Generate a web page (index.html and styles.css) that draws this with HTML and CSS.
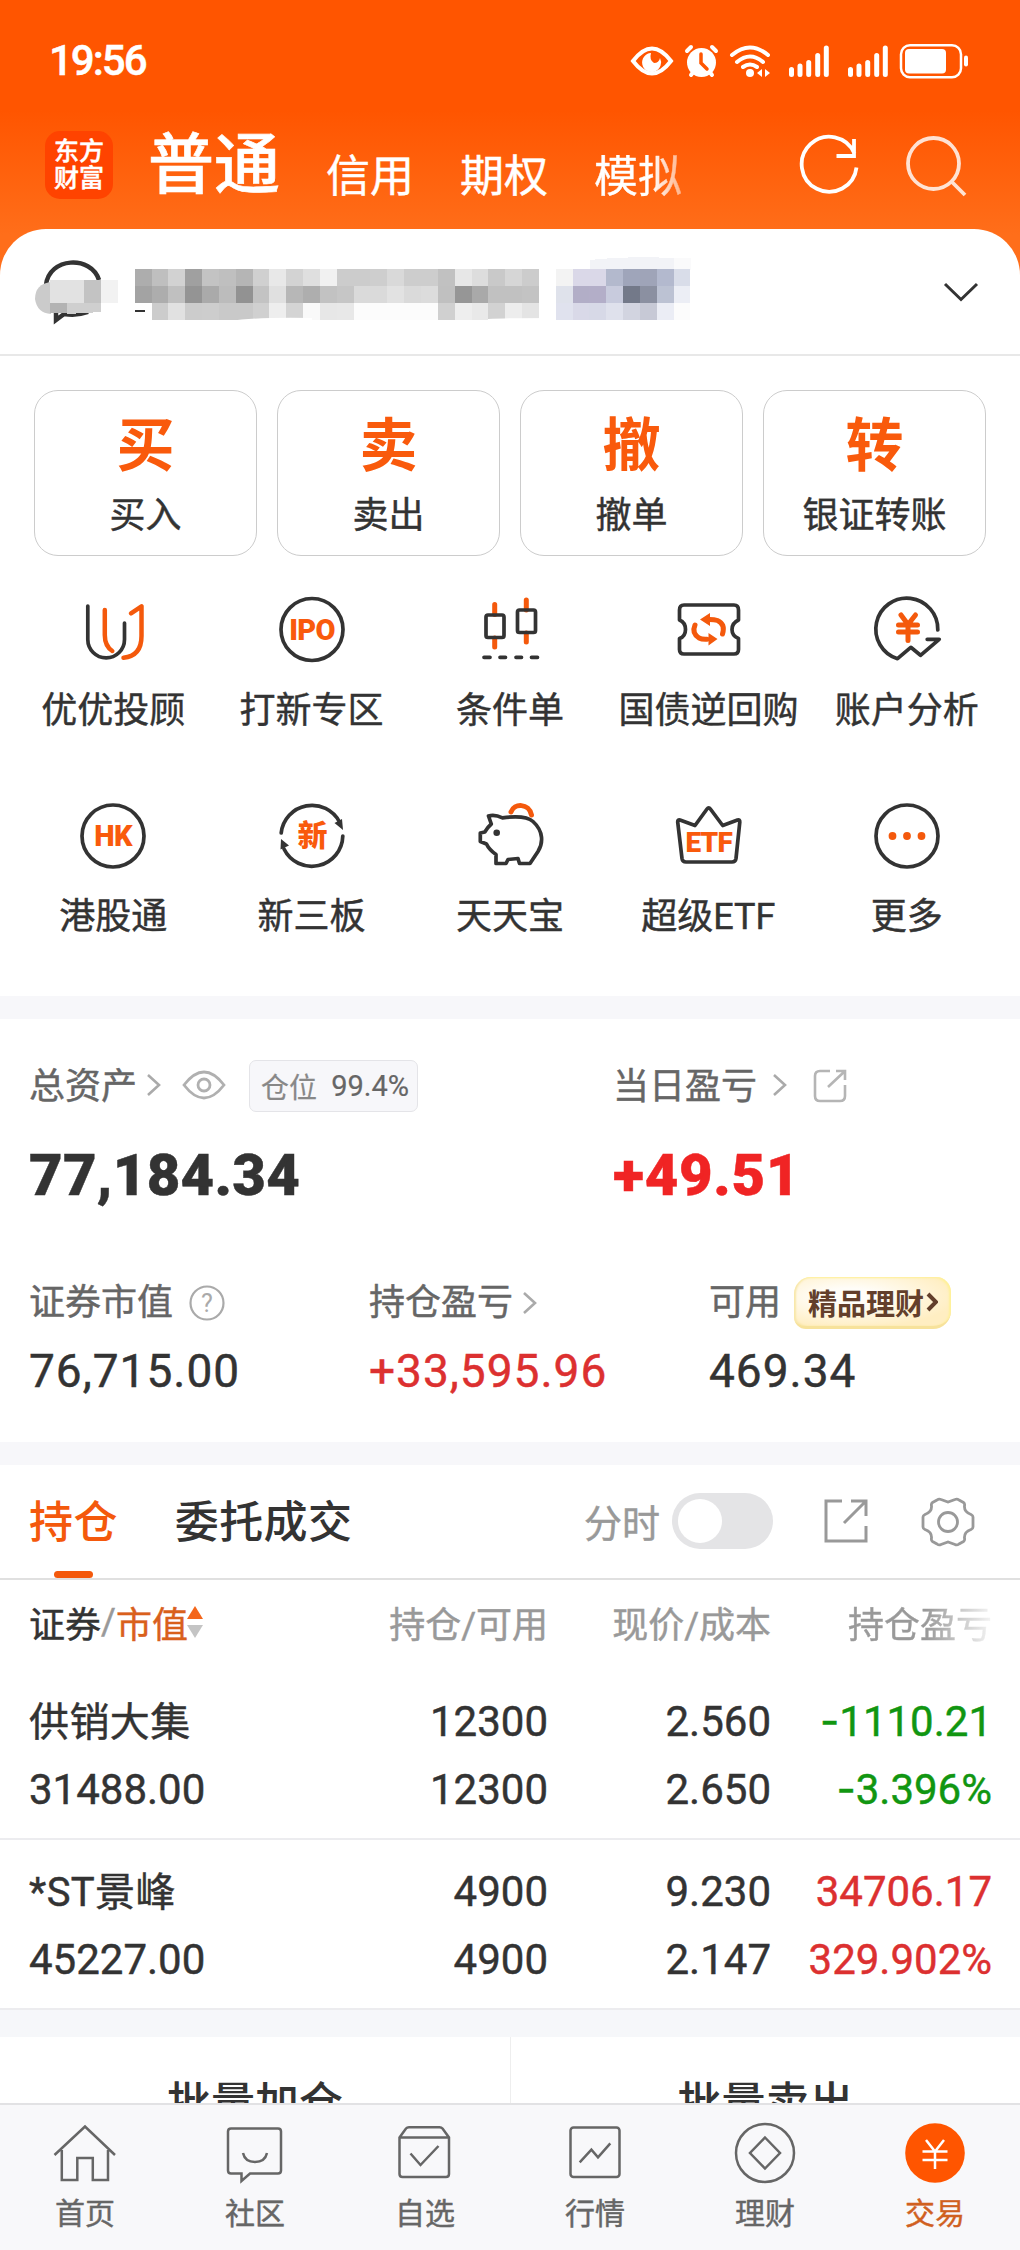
FILE: index.html
```html
<!DOCTYPE html>
<html lang="zh-CN">
<head>
<meta charset="utf-8">
<title>东方财富 - 交易</title>
<link rel="stylesheet" href="styles.css">
</head>
<body>
<div class="app">
  <header class="top">
    <div class="status">
      <span class="clock">19:56</span>
      <svg class="status-icons" viewBox="625 36 350 44" fill="none" stroke="#fff" stroke-width="4" stroke-linecap="round">
        <path d="M632 59q19-25 38 0q-19 25-38 0z"/>
        <path d="M650 51a9.5 9.5 0 1 0 9 5q-1 5-6 5q-5-3-3-10z" fill="#fff" stroke="none"/>
        <circle cx="700.5" cy="60.500" r="14.500" fill="#fff" stroke="none"/>
        <path d="M686 49l4-4M715 49l-4-4M690 73l3-4M711 73l-3-4"/>
        <path d="M700 52v9l6 6" stroke="#ff5500" stroke-width="3.500"/>
        <path d="M731 53q18-15 36 0M736 60q13-11 26 0M742 65q7-5 14 0"/>
        <circle cx="749" cy="71" r="4" fill="#fff" stroke="none"/>
        <path d="M756 71l5-4v8zM769 71l-5-4v8z" fill="#fff" stroke="none"/>
        <path stroke-width="5" d="M790.500 67.500v5M799 64v8.500M807.700 60.500v12M816.700 53.500v19M825.300 46v26.500M849.500 67.500v5M858 64v8.500M866.700 60.500v12M875.700 53.500v19M884.300 46v26.500"/>
        <rect x="900" y="43.200" width="60" height="32" rx="9" stroke-width="2.500"/>
        <rect x="904" y="47" width="41" height="24.500" rx="4" fill="#fff" stroke="none"/>
        <path d="M965 55.500v7"/>
      </svg>
    </div>
    <nav class="modes">
      <div class="logo"><span>东方</span><span>财富</span></div>
      <span class="mode mode-on">普通</span>
      <span class="mode">信用</span>
      <span class="mode">期权</span>
      <span class="mode mode-fade">模拟</span>
      <svg class="head-icon refresh" viewBox="0 0 64 64"><path d="M57.500 18.500A27.500 27.500 0 1 0 59.500 32.500M57 4v17H39.500" transform="translate(0 1)"/></svg>
      <svg class="head-icon search" viewBox="0 0 64 64"><circle cx="29.500" cy="29.500" r="25.500"/><path d="M47 47l14 14"/></svg>
    </nav>
  </header>

  <main class="sheet">
    <section class="account">
      <svg class="mosaic" viewBox="0 229 720 126" shape-rendering="crispEdges">
        <g shape-rendering="auto" fill="none" stroke="#333" stroke-width="4.500"><path d="M46 285C49 257 91 255 99 280M56 311v9l8-6q13 2 24-2"/></g>
        <path d="M135 310.500h10" stroke="#333" stroke-width="2"/>
        <path d="M51 282q-16 2-16 17q2 14 16 15z" fill="#cbcbcb" shape-rendering="auto"/>
        <path fill="#e2e2e2" d="M50 280h34v23H50z"/><path fill="#c3c3c3" d="M84 280h17v23H84z"/><path fill="#f2f2f2" d="M101 280h17v23h-17z"/>
        <path fill="#b3b3b3" d="M50 303h18v10H50z"/><path fill="#cfcfcf" d="M67 303h34v9l-34 2z"/>
        <path fill="#f2f3f7" d="M590 260q35-4 84-2v12h-84z"/><path fill="#fafafb" d="M674 258h17v12h-17z"/>
        <g id="cells"></g>
        <path fill="#fff" shape-rendering="auto" d="M143 312q3 8 12 9h-12zM230 321q25-4 82-3v3zM488 321v-2q20-1 66-1v3z"/>
      </svg>
      <svg class="down" viewBox="0 0 36 22"><path d="M2 3l16 15.500L34 3"/></svg>
    </section>

    <section class="actions">
      <div class="card"><b>买</b><span>买入</span></div>
      <div class="card"><b>卖</b><span>卖出</span></div>
      <div class="card"><b>撤</b><span>撤单</span></div>
      <div class="card"><b>转</b><span>银证转账</span></div>
    </section>

    <section class="tools">
      <div class="tool"><svg viewBox="0 0 80 80"><path d="M14.800 16v33.500a18.300 18.300 0 0 0 36.700 0V33"/><path class="o u" d="M31.800 20v25q0 11 7.500 16M58 23.300l10.500-7V46q0 20-18 21.700"/></svg><span>优优投顾</span></div>
      <div class="tool"><svg viewBox="0 0 80 80"><circle cx="40" cy="39.500" r="31"/><text x="40" y="50">IPO</text></svg><span>打新专区</span></div>
      <div class="tool"><svg viewBox="0 0 80 80"><path class="o w" d="M24.700 14.500v10M24.700 48v9M56.300 10v10M56.300 43v9"/><rect x="16" y="25" width="18" height="22.500" rx="2"/><rect x="47.500" y="20" width="18" height="22.500" rx="2"/><path d="M14 67.300h6M30 67.300h5.500M46 67.300h5.500M61.500 67.300h6"/></svg><span>条件单</span></div>
      <div class="tool"><svg viewBox="0 0 80 80"><path d="M16 15h50q4.500 0 4.500 5v10q-6.500 3-6.500 9.500t6.500 9v11q0 4.500-4.500 4.500H16q-4.500 0-4.500-4.500v-11q6-2 6-9t-6-9.500V20q0-5 4.500-5z"/><path class="o w" d="M54.500 44q3-10-5-13.500-3-1-8-1M27 35q-3.500 8 4 13 3 1.500 8 1.200"/><path class="f" d="M32 29.500l10-6.500v13zM49.500 49l-9-6v12.500z"/></svg><span>国债逆回购</span></div>
      <div class="tool"><svg viewBox="0 0 80 80"><path d="M70.800 40A31 31 0 1 0 30.500 68.700L43.800 57.300 53.500 65.300 72.200 49.300H60.200"/><path class="o w" d="M34 25l7 9.500L48.500 25M31.500 35h19M31.500 42h19M41 35v15.500"/></svg><span>账户分析</span></div>
      <div class="tool"><svg viewBox="0 0 80 80"><circle cx="40" cy="40" r="31"/><text x="40" y="50">HK</text></svg><span>港股通</span></div>
      <div class="tool"><svg viewBox="0 0 80 80"><path d="M9.200 37A31 31 0 0 1 67.500 26M70.800 40A31 31 0 0 1 12 53"/><path class="d" d="M62.500 27l7.500-4 1 11zM9 43l8 6.500-8.500 4z"/><text class="cn" x="40" y="50">新</text></svg><span>新三板</span></div>
      <div class="tool"><svg viewBox="0 0 80 80"><path class="o w" d="M41 16C44 7 59 7 61.500 19"/><path d="M18.500 20q6-2 14 1.800C46 20 57 20 63 25.500c11 10 10 22 5 30L60 67.500H49.500L48 62.500l-10 1-2 4H26v-9q-7-5-9.500-10.500L10.300 45.500v-8.500l4.500-1q3-5 6.500-8z"/><circle class="d" cx="26.700" cy="36.800" r="3.300"/></svg><span>天天宝</span></div>
      <div class="tool"><svg viewBox="0 0 80 80"><path d="M12 24l15 5.500L39 13q1.700-2.300 3.400 0L54.700 29.500 69.500 24q2.500-.5 2.300 2L68 62.500q-.5 3.500-4 3.500H18q-3.500 0-4-3.500L9.700 26q0-2.500 2.300-2z"/><text class="etf" x="40.700" y="56">ETF</text></svg><span>超级ETF</span></div>
      <div class="tool"><svg viewBox="0 0 80 80"><circle cx="40" cy="40" r="31"/><g class="f"><circle cx="25.500" cy="40" r="3.900"/><circle cx="40" cy="40" r="3.900"/><circle cx="54.500" cy="40" r="3.900"/></g></svg><span>更多</span></div>
    </section>

    <section class="assets">
      <div class="row heads">
        <div class="cell total"><span>总资产</span><svg class="chev" viewBox="0 0 16 24"><path d="M2 2l11 10L2 22"/></svg>
          <svg class="eye" viewBox="0 0 44 30"><path d="M2 15Q22-11 42 15 22 41 2 15z"/><circle cx="22" cy="15" r="6"/></svg>
          <span class="tag"><i>仓位</i><em>99.4%</em></span></div>
        <div class="cell"><span>当日盈亏</span><svg class="chev day" viewBox="0 0 16 24"><path d="M2 2l11 10L2 22"/></svg>
          <svg class="ext" viewBox="0 0 34 34"><path d="M17 2H7Q2 2 2 7v20q0 5 5 5h20q5 0 5-5V16M15 18L32 2M23 2h9v9"/></svg></div>
      </div>
      <div class="row big"><div class="cell total">77,184.34</div><div class="cell red">+49.51</div></div>
      <div class="trio labels">
        <div><span>证券市值</span><svg class="help" viewBox="0 0 36 36"><circle cx="18" cy="18" r="16.500"/><text x="18" y="27">?</text></svg></div>
        <div><span>持仓盈亏</span><svg class="chev" viewBox="0 0 16 24"><path d="M2 2l11 10L2 22"/></svg></div>
        <div><span>可用</span><div class="badge">精品理财<svg viewBox="0 0 12 20"><path d="M2 2l8 8-8 8"/></svg></div></div>
      </div>
      <div class="trio values"><div>76,715.00</div><div class="red2">+33,595.96</div><div>469.34</div></div>
    </section>

    <section class="holdings">
      <div class="tabs">
        <span class="tab tab-on">持仓</span><span class="tab">委托成交</span>
        <span class="minute">分时</span><span class="switch"></span>
        <svg class="open" viewBox="0 0 44 44"><path d="M18 2H2v40h40V27M20 24L41 3M27 2h15v15"/></svg>
        <svg class="gear" viewBox="-27 -27 54 54"><path d="M-7-22.500L0-20 7-22.500Q9-23.500 11-22L15.500-19.500Q17-18.500 16.500-16 16-10 23-7.500 25-6.500 25-5V5Q25 6.500 23 7.500 16 10 16.500 16 17 18.500 15.500 19.500L11 22Q9 23.500 7 22.500L0 20-7 22.500Q-9 23.500-11 22L-15.500 19.500Q-17 18.500-16.500 16-16 10-23 7.500-25 6.500-25 5V-5Q-25-6.500-23-7.500-16-10-16.500-16-17-18.500-15.500-19.500L-11-22Q-9-23.500-7-22.500z"/><circle r="9.500"/></svg>
      </div>
      <div class="grid thead"><div><span class="ink">证券</span>/<span class="hot">市值</span><svg class="sort" viewBox="0 0 16 32"><path fill="#f4661b" d="M8 0l8 13H0z"/><path fill="#c4c4c4" d="M8 32l8-13H0z"/></svg></div><div>持仓/可用</div><div>现价/成本</div><div class="fade">持仓盈亏</div></div>
      <div class="stock">
        <div class="grid"><div class="name">供销大集</div><div>12300</div><div>2.560</div><div class="green"><span class="neg">-</span>1110.21</div></div>
        <div class="grid"><div>31488.00</div><div>12300</div><div>2.650</div><div class="green"><span class="neg">-</span>3.396%</div></div>
      </div>
      <div class="stock">
        <div class="grid"><div class="name">*ST景峰</div><div>4900</div><div>9.230</div><div class="red2">34706.17</div></div>
        <div class="grid"><div>45227.00</div><div>4900</div><div>2.147</div><div class="red2">329.902%</div></div>
      </div>
    </section>
    <section class="bulk"><div>批量加仓</div><div>批量卖出</div></section>
  </main>

  <footer class="nav">
    <div><svg viewBox="0 0 70 70"><path d="M4.500 37L35 8.500 65 37M11.800 32v30h15.500V40h15.500v22H58V32"/></svg><span>首页</span></div>
    <div><svg viewBox="0 0 70 70"><path d="M11 10.500h47q3 0 3 3v39q0 3-3 3H30l-8.500 7.500v-7.500H11q-3 0-3-3v-39q0-3 3-3zM23 35q2 9 12 9t12-9"/></svg><span>社区</span></div>
    <div><svg viewBox="0 0 70 70"><path d="M9.500 19.500L16 10.500Q17 9.300 19 9.300H49.500Q51.500 9.300 52.500 10.500L59 19.500V56q0 3-3 3H12.500q-3 0-3-3zH59M20.500 35.500L30.500 47 48.500 28"/></svg><span>自选</span></div>
    <div><svg viewBox="0 0 70 70"><rect x="10.500" y="9.500" width="49" height="49.500" rx="3"/><path d="M19.700 44.300L31.400 31.700 38 39.300 50.300 25.300"/></svg><span>行情</span></div>
    <div><svg viewBox="0 0 70 70"><circle cx="35" cy="35" r="29"/><path d="M35 19.500L50 35 35 50.500 20 35z"/></svg><span>理财</span></div>
    <div class="current"><svg viewBox="0 0 70 70"><circle class="disc" cx="35" cy="35" r="29.800"/><path class="yen" d="M26 22l9 11.500L44 22M22.500 33.500h25M22.500 42h25M35 33.500V51"/></svg><span>交易</span></div>
  </footer>
</div>
<script src="mosaic.js"></script>
</body>
</html>
```
FILE: mosaic.js
```js
// Pixelated cover over the account name and number: rows of 16.84px cells.
const size = 16.84;
const rows = [
  { y: 16, from: 8, c: "ad bf d2 a0 c3 bf b5 d0 e8 d3 df f1 cc cc ce d9 cd cd c1 e7 dd c9 d6 cc" },
  { y: 17, from: 8, c: "a3 ad c0 94 aa bc 92 c3 e0 b7 ae c2 c6 da da e2 da dc c0 96 a9 c1 c1 c3" },
  { y: 18, from: 9, c: "cc e1 cc cd c9 c9 d0 ee d4 f9 e7 e8 fc fc fc fc fc d0 ee e9 d2 ed e4" },
  { y: 16, from: 33, c: "f3f3f3 dad8e8 dad8e8 b3b9cd 9fa5ba 9fa4b8 b3b9ce d9dde9" },
  { y: 17, from: 33, c: "dfe2eb b2aec7 b3aec8 c8cbdd 737989 8b90a1 bcc2d3 eceef5" },
  { y: 18, from: 33, c: "e0e2ee d9d9e8 d7d9e7 dfe1ec d2d4e0 c7c9d6 ebedf5 fcfcfc" }
];
const cells = document.getElementById("cells");
for (const row of rows) {
  row.c.split(" ").forEach((c, i) => {
    const r = document.createElementNS("http://www.w3.org/2000/svg", "rect");
    r.setAttribute("x", (row.from + i) * size);
    r.setAttribute("y", row.y * size);
    r.setAttribute("width", size);
    r.setAttribute("height", size);
    r.setAttribute("fill", "#" + (c.length === 2 ? c + c + c : c));
    cells.appendChild(r);
  });
}
```
FILE: styles.css
```css
* { box-sizing: border-box; }
body { margin: 0; background: #fff; color: #333; font-family: Roboto, "Noto Sans CJK SC", sans-serif; -webkit-text-stroke: .45px; }
svg { display: block; flex: none; }
.app { width: 1020px; height: 2250px; display: flex; flex-direction: column; overflow: hidden; background: linear-gradient(#ff5500 0, #ff5500 110px, #ff6e1a 235px, #ff6e1a 300px, #fff 300px); }
.top { height: 229px; flex: none; color: #fff; }
.status { height: 118px; padding: 2px 44px 0 49px; display: flex; justify-content: space-between; align-items: center; }
.clock { font-size: 42px; font-weight: 500; letter-spacing: -2px; }
.status-icons { width: 350px; height: 44px; }
.modes { display: flex; align-items: flex-start; padding: 0 52px 0 45px; line-height: 1; }
.logo { width: 68px; height: 68px; margin-top: 13px; border-radius: 15px; background: #ff4300; display: flex; flex-direction: column; align-items: center; justify-content: center; font-size: 25px; line-height: 27px; font-weight: 500; }
.mode { font-size: 44px; margin: 37px 0 0 46px; }
.mode-on { font-size: 66px; font-weight: 500; margin: 15px 0 0 35px; -webkit-text-stroke: .6px; }
.mode-fade { background: linear-gradient(90deg, #fff 65%, rgba(255,255,255,.5)); -webkit-background-clip: text; color: transparent; }
.head-icon { width: 64px; height: 64px; fill: none; stroke: #fff; stroke-width: 3.8; }
.refresh { margin: 16px 0 0 auto; }
.search { margin: 16px 0 0 43px; opacity: .82; }

.sheet { flex: 1; min-height: 0; overflow: hidden; background: #fff; border-radius: 46px 46px 0 0; }
.account { height: 127px; border-bottom: 2px solid #e8e8e8; display: flex; align-items: center; justify-content: space-between; padding-right: 41px; }
.mosaic { width: 720px; height: 126px; }
.down { width: 36px; height: 22px; fill: none; stroke: #333; stroke-width: 3; }

.actions { display: grid; grid-template-columns: repeat(4, 1fr); gap: 20px; padding: 34px 34px 0; }
.card { height: 166px; border: 1.5px solid #ccc; border-radius: 24px; display: flex; flex-direction: column; align-items: center; }
.card b { font-size: 58px; line-height: 60px; margin-top: 25px; color: #f95a0c; -webkit-text-stroke: 0; }
.card span { font-size: 36px; line-height: 44px; margin-top: 18px; }

.tools { display: grid; grid-template-columns: repeat(5, 1fr); grid-auto-rows: 206px; padding: 34px 14px 0; height: 440px; }
.tool { display: flex; flex-direction: column; align-items: center; font-size: 36px; line-height: 44px; white-space: nowrap; }
.tool svg { width: 80px; height: 80px; margin-bottom: 19px; fill: none; stroke: #333; stroke-width: 3.7; stroke-linecap: round; stroke-linejoin: round; }
.tool .o { stroke: #f4590c; }
.tool .w { stroke-width: 5; }
.tool .u { stroke-width: 4.5; }
.tool .f { fill: #f4590c; stroke: none; }
.tool .d { fill: #333; stroke: none; }
.tool text { fill: #f95a0c; stroke: none; font-size: 29px; font-weight: 900; text-anchor: middle; letter-spacing: -.8px; }
.tool text.cn { font-size: 30px; }
.tool text.etf { font-size: 28px; }

.assets { height: 446px; border-top: 23px solid #f7f7fa; padding: 37px 29px 0; color: #333; }
.row { display: flex; }
.cell { display: flex; align-items: center; }
.cell.total { width: 584px; }
.heads { height: 58px; color: #666; font-size: 36px; }
.heads .cell > span:first-child { margin-top: -4px; }
.chev { width: 16px; height: 24px; margin-left: 9px; fill: none; stroke: #aaa; stroke-width: 2.6; }
.chev.day { margin-left: 15px; }
.eye { width: 44px; height: 30px; margin-left: 20px; fill: none; stroke: #b0b0b0; stroke-width: 2.8; }
.ext { width: 34px; height: 34px; margin: 1px 0 0 25px; fill: none; stroke: #b5b5b5; stroke-width: 2.6; }
.tag { width: 169px; height: 52px; margin: 1px 0 0 23px; border: 1.5px solid #e4e4e8; border-radius: 7px; background: #f7f7fa; display: flex; align-items: center; justify-content: space-between; padding: 0 8px 0 11px; font-size: 28px; -webkit-text-stroke: .2px; }
.tag i, .tag em { font-style: normal; }
.tag i { color: #888; }
.tag em { font-size: 29px; }
.big { height: 66px; margin-top: 28px; font-size: 58px; font-weight: 900; align-items: center; letter-spacing: .3px; }
.red { color: #f02424; letter-spacing: .7px; }
.red2 { color: #dc3030; }
.trio { display: grid; grid-template-columns: 340px 340px 1fr; }
.trio > div { display: flex; align-items: center; }
.labels { height: 56px; margin-top: 67px; font-size: 36px; color: #666; white-space: nowrap; }
.labels span { margin-top: -8px; }
.help { width: 36px; height: 36px; margin-left: 16px; fill: none; stroke: #aaa; stroke-width: 2.2; }
.help text { fill: #aaa; stroke: none; font-size: 25px; text-anchor: middle; }
.badge { width: 157px; height: 52px; margin-left: 13px; padding-left: 14px; border-radius: 17px 15px 18px 12px; border-bottom: 3px solid #f7e29b; background: radial-gradient(ellipse at 35% 40%, #fffdf8 20%, #ffeec2 75%); box-shadow: inset -2px 1px 2px #fff19a, inset 2px 0 2px #f8e7a9; display: flex; align-items: center; color: #633f2b; font-size: 29px; font-weight: 700; -webkit-text-stroke: 0; }
.badge svg { width: 12px; height: 20px; margin-left: 2px; fill: none; stroke: #633f2b; stroke-width: 4; }
.values { height: 54px; margin-top: 13px; font-size: 46px; letter-spacing: 1px; }

.holdings { border-top: 23px solid #f7f7fa; }
.tabs { height: 115px; border-bottom: 2px solid #e0e0e0; display: flex; align-items: center; padding: 0 45px 0 29px; }
.tab { height: 113px; line-height: 116px; font-size: 44px; font-weight: 500; letter-spacing: .4px; margin-right: 57px; display: flex; flex-direction: column; align-items: center; -webkit-text-stroke: 0; }
.tab-on { color: #f4590c; }
.tab-on::after { content: ""; width: 39px; height: 7px; margin-top: -10px; border-radius: 4px; background: #f4590c; }
.minute { margin: -3px 0 0 auto; font-size: 38px; color: #999; }
.switch { width: 101px; height: 56px; margin: -2px 51px 0 12px; padding: 6px; border-radius: 28px; background: #e4e4e6; }
.switch::before { content: ""; display: block; width: 44px; height: 44px; border-radius: 50%; background: #fff; }
.open { width: 44px; height: 44px; margin: -1px 53px 0 0; fill: none; stroke: #999; stroke-width: 3; }
.gear { width: 54px; height: 54px; fill: none; stroke: #999; stroke-width: 2.8; }
.grid { display: grid; grid-template-columns: 319px 200px 223px 221px; padding-left: 29px; text-align: right; align-items: center; white-space: nowrap; height: 68px; }
.grid > :first-child { text-align: left; }
.thead { height: 90px; padding-bottom: 7px; font-size: 36px; color: #999; }
.thead > :first-child { display: flex; align-items: center; }
.ink { color: #333; }
.hot { color: #d9601c; }
.sort { width: 16px; height: 32px; margin-left: -1px; }
.fade { background: linear-gradient(90deg, #999 70%, rgba(153,153,153,.1)); -webkit-background-clip: text; color: transparent; }
.stock { height: 170px; padding-top: 17px; border-bottom: 2px solid #ececef; font-size: 42px; }
.name { font-size: 40px; letter-spacing: .4px; padding-bottom: 4px; }
.green { color: #119611; }
.neg { font-family: Inter, sans-serif; line-height: 1; }
.bulk { border-top: 27px solid #f6f7fa; display: grid; grid-template-columns: 1fr 1fr; height: 160px; text-align: center; font-size: 44px; font-weight: 500; line-height: 134px; -webkit-text-stroke: 0; }
.bulk div + div { border-left: 1.5px solid #eee; }

.nav { height: 147px; flex: none; border-top: 2px solid #e2e2e4; background: #f8f8fa; display: grid; grid-template-columns: repeat(6, 1fr); padding-top: 13px; color: #666; font-size: 30px; line-height: 40px; }
.nav div { display: flex; flex-direction: column; align-items: center; }
.nav svg { width: 70px; height: 70px; margin-bottom: 6px; fill: none; stroke: #666; stroke-width: 2.5; }
.nav .current { color: #d0601f; }
.nav .disc { fill: #ff5500; stroke: none; }
.nav .yen { stroke: #fff; }
```
